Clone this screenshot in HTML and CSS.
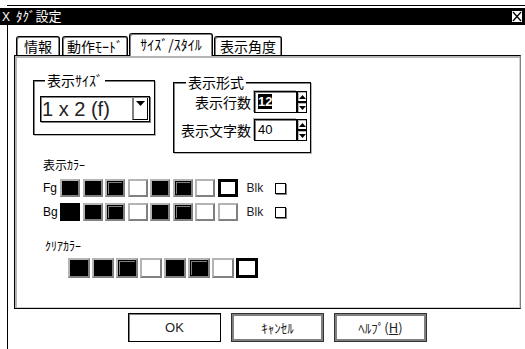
FILE: index.html
```html
<!DOCTYPE html>
<html lang="ja">
<head>
    <meta charset="UTF-8">
    <title>ﾀｸﾞ設定</title>
    <link rel="stylesheet" href="styles.css">
</head>
<body>

    <div class="frame-top"></div>
    <div class="titlebar">
        <span class="title"><span class="sysmenu">X</span>ﾀｸﾞ設定</span>
        <span class="close-box">
            <svg width="10" height="11" viewBox="0 0 10 11"><path d="M1 1 L9 10 M9 1 L1 10" stroke="#000" stroke-width="1.3" fill="none"/></svg>
        </span>
    </div>

    <div class="window-body">
        <div class="tabs">
            <div class="tab tab-info">情報</div>
            <div class="tab tab-mode">動作ﾓｰﾄﾞ</div>
            <div class="tab tab-active">ｻｲｽﾞ/ｽﾀｲﾙ</div>
            <div class="tab tab-angle">表示角度</div>
        </div>

        <div class="panel">
            <div class="group-row">
                <div class="group group-size">
                    <div class="group-title">表示ｻｲｽﾞ</div>
                    <div class="dropdown">
                        <span class="dd-text">1 x 2 (f)</span>
                        <span class="dd-btn">
                            <svg width="9" height="6" viewBox="0 0 9 6"><path d="M0 0 H9 L4.5 5 Z" fill="#000"/></svg>
                        </span>
                    </div>
                </div>

                <div class="group group-format">
                    <div class="group-title">表示形式</div>
                    <div class="field-grid">
                        <span class="field-label">表示行数</span>
                        <div class="spin-field">
                            <span class="spin-input"><span class="selected">12</span></span>
                            <span class="spin-btns">
                                <span class="spin-btn"><svg width="7" height="4" viewBox="0 0 7 4"><path d="M0 4 H7 L3.5 0 Z" fill="#000"/></svg></span>
                                <span class="spin-btn"><svg width="7" height="4" viewBox="0 0 7 4"><path d="M0 0 H7 L3.5 4 Z" fill="#000"/></svg></span>
                            </span>
                        </div>

                        <span class="field-label">表示文字数</span>
                        <div class="spin-field">
                            <span class="spin-input">40</span>
                            <span class="spin-btns">
                                <span class="spin-btn"><svg width="7" height="4" viewBox="0 0 7 4"><path d="M0 4 H7 L3.5 0 Z" fill="#000"/></svg></span>
                                <span class="spin-btn"><svg width="7" height="4" viewBox="0 0 7 4"><path d="M0 0 H7 L3.5 4 Z" fill="#000"/></svg></span>
                            </span>
                        </div>
                    </div>
                </div>
            </div>

            <div class="colors">
                <div class="section-label">表示ｶﾗｰ</div>

                <div class="color-row">
                    <span class="row-name">Fg</span>
                    <div class="swatches">
                        <span class="sw sw-dark"></span>
                        <span class="sw sw-dark"></span>
                        <span class="sw sw-dark sw-dim"></span>
                        <span class="sw"></span>
                        <span class="sw sw-dark"></span>
                        <span class="sw sw-dark sw-dim"></span>
                        <span class="sw"></span>
                        <span class="sw sw-picked"></span>
                    </div>
                    <span class="blk">Blk</span>
                    <span class="check"></span>
                </div>

                <div class="color-row">
                    <span class="row-name">Bg</span>
                    <div class="swatches">
                        <span class="sw sw-dark sw-picked"></span>
                        <span class="sw sw-dark"></span>
                        <span class="sw sw-dark sw-dim"></span>
                        <span class="sw"></span>
                        <span class="sw sw-dark"></span>
                        <span class="sw sw-dark sw-dim"></span>
                        <span class="sw"></span>
                        <span class="sw"></span>
                    </div>
                    <span class="blk">Blk</span>
                    <span class="check"></span>
                </div>

                <div class="section-label clear-label">ｸﾘｱｶﾗｰ</div>
                <div class="swatches swatches-lg">
                    <span class="sw sw-dark"></span>
                    <span class="sw sw-dark"></span>
                    <span class="sw sw-dark sw-dim"></span>
                    <span class="sw"></span>
                    <span class="sw sw-dark"></span>
                    <span class="sw sw-dark sw-dim"></span>
                    <span class="sw"></span>
                    <span class="sw sw-picked"></span>
                </div>
            </div>
        </div>

        <div class="buttons">
            <button class="btn btn-default">OK</button>
            <button class="btn">ｷｬﾝｾﾙ</button>
            <button class="btn">ﾍﾙﾌﾟ(<u>H</u>)</button>
        </div>
    </div>

</body>
</html>
```

FILE: styles.css
```css
:root {
    --schwarz: #000000;
    --grau: #808080;
    --hellgrau: #b4b4b4;
    --weiss: #FFFFFF;
}

body {
    margin: 0;
    padding-top: 5px;
    width: 525px;
    height: 349px;
    box-sizing: border-box;
    overflow: hidden;
    background-color: var(--weiss);
    color: var(--schwarz);
    font-family: "Noto Sans CJK JP", "Noto Sans", sans-serif;
    font-size: 13px;
}

.frame-top {
    margin-left: 7px;
    height: 1px;
    background-color: var(--schwarz);
    margin-bottom: 2px;
}

.titlebar {
    height: 17px;
    background-color: var(--schwarz);
    color: var(--weiss);
    display: flex;
    align-items: center;
    justify-content: space-between;
    padding: 0 2px 0 2px;
    line-height: 17px;
}

.sysmenu {
    font-family: "Liberation Sans", sans-serif;
    font-size: 12px;
    margin-right: 6px;
}

.close-box {
    width: 10px;
    height: 11px;
    border: 1px solid var(--schwarz);
    background-color: var(--weiss);
    display: flex;
}

.window-body {
    margin-left: 7px;
    border-left: 1px solid var(--schwarz);
    height: 324px;
    box-sizing: border-box;
    padding: 8px 0 0 6px;
}

/* Reiter */
.tabs {
    display: flex;
    align-items: flex-end;
    height: 22px;
    padding-left: 2px;
    gap: 2px;
}

.tab {
    height: 19px;
    box-sizing: border-box;
    border: 1px solid var(--schwarz);
    border-bottom: none;
    border-radius: 3px 3px 0 0;
    box-shadow: inset 1px 1px 0 var(--grau), inset -1px 0 0 var(--grau);
    font-size: 14px;
    line-height: 18px;
    text-align: center;
}

.tab-info { width: 44px; }
.tab-mode { width: 66px; }
.tab-angle { width: 68px; }

.tab-active {
    width: 84px;
    height: 23px;
    margin: 0 -1px -1px -1px;
    background-color: var(--weiss);
    line-height: 20px;
}

.panel {
    width: 507px;
    height: 254px;
    box-sizing: border-box;
    border: 1px solid var(--schwarz);
    border-right-color: var(--grau);
    box-shadow: inset 2px 2px 0 var(--hellgrau), inset -1px -1px 0 #d0d0d0;
    padding: 24px 0 0 18px;
}

/* Gruppen */
.group-row {
    display: flex;
    align-items: flex-start;
    gap: 18px;
}

.group {
    box-sizing: border-box;
    border: 1px solid var(--schwarz);
    box-shadow: inset 1px 1px 0 var(--grau), 1px 1px 0 var(--hellgrau);
}

.group-title {
    width: fit-content;
    margin: -8px 0 0 5px;
    padding: 0 2px;
    background-color: var(--weiss);
    font-size: 14px;
    line-height: 14px;
}

.group-size {
    width: 122px;
    height: 55px;
    padding-left: 6px;
}

.group-format {
    width: 138px;
    height: 71px;
    margin-top: 2px;
    padding-left: 7px;
}

.dropdown {
    margin-top: 9px;
    width: 110px;
    height: 26px;
    box-sizing: border-box;
    border: 1px solid var(--schwarz);
    box-shadow: inset 1px 1px 0 var(--grau), 1px 1px 0 var(--grau);
    display: flex;
    align-items: stretch;
}

.dd-text {
    flex: 1;
    font-family: "Liberation Sans", sans-serif;
    font-size: 20px;
    line-height: 24px;
    padding-left: 1px;
    color: #222;
}

.dd-btn {
    width: 13px;
    margin: 1px 1px 1px 0;
    border-left: 2px solid var(--grau);
    border-right: 1px solid var(--schwarz);
    border-bottom: 1px solid var(--schwarz);
    display: flex;
    justify-content: center;
    align-items: flex-start;
    padding-top: 3px;
}

.field-grid {
    display: grid;
    grid-template-columns: 70px auto;
    column-gap: 3px;
    row-gap: 6px;
    margin-top: 2px;
    align-items: center;
}

.field-label {
    font-size: 14px;
    text-align: right;
    white-space: nowrap;
}

.spin-field {
    display: flex;
}

.spin-input {
    width: 43px;
    height: 22px;
    box-sizing: border-box;
    border: 1px solid var(--schwarz);
    box-shadow: inset 1px 1px 0 var(--grau), -1px -1px 0 var(--hellgrau);
    font-family: "Liberation Sans", sans-serif;
    font-size: 13px;
    line-height: 20px;
    padding-left: 3px;
}

.selected {
    background-color: var(--schwarz);
    color: var(--weiss);
    font-weight: bold;
}

.spin-btns {
    display: flex;
    flex-direction: column;
}

.spin-btn {
    width: 10px;
    height: 11px;
    box-sizing: border-box;
    border: 1px solid var(--schwarz);
    box-shadow: inset 1px 1px 0 var(--hellgrau);
    display: flex;
    justify-content: center;
    align-items: center;
}

/* Farben */
.colors {
    padding-left: 10px;
    margin-top: 4px;
}

.section-label {
    font-size: 12px;
    line-height: 16px;
}

.color-row {
    display: flex;
    align-items: center;
    height: 18px;
    margin-top: 6px;
    font-family: "Liberation Sans", sans-serif;
    font-size: 12px;
}

.color-row + .color-row {
    margin-top: 6px;
}

.row-name {
    width: 17px;
}

.swatches {
    display: flex;
    gap: 2.5px;
}

.sw {
    width: 20px;
    height: 18px;
    box-sizing: border-box;
    border: 2px solid;
    border-color: var(--hellgrau) var(--grau) var(--grau) var(--hellgrau);
    background-color: var(--weiss);
}

.sw-dark {
    background-color: var(--schwarz);
}

.sw-dim {
    box-shadow: inset 0 0 0 1px var(--schwarz), inset 2px 2px 0 var(--grau);
}

.sw-picked {
    border: 3px solid var(--schwarz);
    box-shadow: none;
}

.blk {
    margin-left: 9px;
    color: #222;
}

.check {
    width: 9px;
    height: 9px;
    margin-left: 12px;
    border: 1px solid var(--schwarz);
    box-shadow: 1px 1px 0 var(--grau);
}

.clear-label {
    margin-top: 17px;
    padding-left: 2px;
}

.swatches-lg {
    margin: 4px 0 0 25px;
    gap: 2px;
}

.swatches-lg .sw {
    width: 22px;
    height: 20px;
}

/* Schaltflächen */
.buttons {
    display: flex;
    gap: 10px;
    margin-top: 4px;
    padding-left: 114px;
}

.btn {
    width: 93px;
    height: 29px;
    box-sizing: border-box;
    background-color: var(--weiss);
    border: 1px solid #333;
    box-shadow: inset 2px 2px 0 var(--grau), inset -2px -2px 0 var(--grau);
    font-family: "Noto Sans CJK JP", sans-serif;
    font-size: 13px;
    color: #222;
    padding: 0;
}

.btn-default {
    border-color: var(--schwarz);
    box-shadow: inset 1px 1px 0 var(--grau);
    font-family: "Liberation Sans", sans-serif;
}
```
